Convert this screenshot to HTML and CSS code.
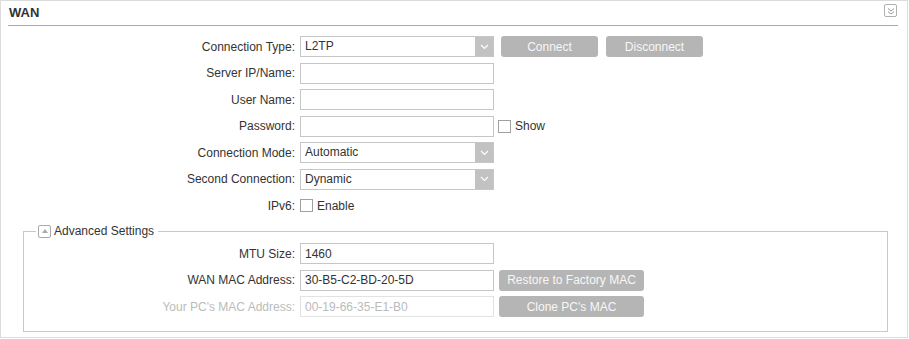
FILE: index.html
```html
<!DOCTYPE html>
<html lang="en">

<head>
    <meta charset="UTF-8">
    <title>WAN</title>
    <link rel="stylesheet" href="styles.css">
</head>

<body>
    <div class="panel">
        <div class="panel-head">
            <h3>WAN</h3>
            <span class="collapse">
                <svg width="8" height="8" viewBox="0 0 8 8"><path d="M1 1.5 L4 4 L7 1.5 M1 4.5 L4 7 L7 4.5" fill="none" stroke="#999" stroke-width="1"/></svg>
            </span>
        </div>

        <div class="form">
            <div class="row">
                <label>Connection Type:</label>
                <div class="select"><span class="val">L2TP</span><span class="arrow"><svg width="9" height="6" viewBox="0 0 9 6"><path d="M1 1 L4.5 4.5 L8 1" fill="none" stroke="#fff" stroke-width="1.2"/></svg></span></div>
                <button class="btn">Connect</button>
                <button class="btn">Disconnect</button>
            </div>
            <div class="row">
                <label>Server IP/Name:</label>
                <input class="text" type="text">
            </div>
            <div class="row">
                <label>User Name:</label>
                <input class="text" type="text">
            </div>
            <div class="row">
                <label>Password:</label>
                <input class="text" type="password">
                <span class="check"></span><span class="check-label">Show</span>
            </div>
            <div class="row">
                <label>Connection Mode:</label>
                <div class="select"><span class="val">Automatic</span><span class="arrow"><svg width="9" height="6" viewBox="0 0 9 6"><path d="M1 1 L4.5 4.5 L8 1" fill="none" stroke="#fff" stroke-width="1.2"/></svg></span></div>
            </div>
            <div class="row">
                <label>Second Connection:</label>
                <div class="select"><span class="val">Dynamic</span><span class="arrow"><svg width="9" height="6" viewBox="0 0 9 6"><path d="M1 1 L4.5 4.5 L8 1" fill="none" stroke="#fff" stroke-width="1.2"/></svg></span></div>
            </div>
            <div class="row">
                <label>IPv6:</label>
                <span class="check first"></span><span class="check-label">Enable</span>
            </div>
        </div>

        <fieldset class="advanced">
            <legend>
                <span class="toggle"><svg width="6" height="4" viewBox="0 0 6 4"><path d="M0 4 L3 0 L6 4 Z" fill="#aaa"/></svg></span>
                Advanced Settings
            </legend>
            <div class="row">
                <label>MTU Size:</label>
                <input class="text" type="text" value="1460">
            </div>
            <div class="row">
                <label>WAN MAC Address:</label>
                <input class="text" type="text" value="30-B5-C2-BD-20-5D">
                <button class="btn wide">Restore to Factory MAC</button>
            </div>
            <div class="row disabled">
                <label>Your PC's MAC Address:</label>
                <input class="text" type="text" value="00-19-66-35-E1-B0" disabled>
                <button class="btn wide">Clone PC's MAC</button>
            </div>
        </fieldset>
    </div>
</body>

</html>
```

FILE: styles.css
```css
* {
    margin: 0;
    padding: 0;
    box-sizing: border-box;
}

body {
    font-family: "Liberation Sans", Arial, sans-serif;
    font-size: 12px;
    color: #333;
    background: #fff;
}

.panel {
    width: 908px;
    height: 338px;
    border: 1px solid #dcdcdc;
}

.panel-head {
    display: flex;
    align-items: center;
    justify-content: space-between;
    height: 25px;
    margin: 0 9px 0 7px;
    border-bottom: 1px solid #a8a8a8;
    padding-left: 1px;
    padding-right: 1px;
}

.panel-head h3 {
    font-size: 13px;
    font-weight: bold;
    color: #333;
    margin-top: -1px;
}

.collapse {
    width: 13px;
    height: 13px;
    border: 1px solid #b0b0b0;
    border-radius: 2px;
    display: flex;
    align-items: center;
    justify-content: center;
    margin-top: -5px;
}

.form {
    padding-top: 10px;
    display: flex;
    flex-direction: column;
    gap: 5.5px;
}

.row {
    display: flex;
    align-items: center;
    height: 21px;
}

.row label {
    width: 299px;
    text-align: right;
    padding-right: 5px;
    flex-shrink: 0;
}

.text {
    width: 194px;
    height: 21px;
    border: 1px solid #c6c6c6;
    font-family: inherit;
    font-size: 12px;
    color: #333;
    padding: 0 4px;
    outline: none;
    background: #fff;
}

.text:disabled {
    border-color: #e2e2e2;
    color: #bbb;
    background: #fff;
}

.select {
    width: 194px;
    height: 21px;
    border: 1px solid #c6c6c6;
    display: flex;
    align-items: stretch;
}

.select .val {
    flex: 1;
    padding-left: 4px;
    line-height: 19px;
}

.select .arrow {
    width: 18px;
    background: #c2c2c2;
    display: flex;
    align-items: center;
    justify-content: center;
}

.btn {
    width: 97px;
    height: 21px;
    margin-left: 7px;
    border: none;
    border-radius: 3px;
    background: #b5b5b5;
    color: #f7f7f7;
    font-family: inherit;
    font-size: 12px;
}

.btn + .btn {
    margin-left: 8px;
}

.btn.wide {
    width: 145px;
    margin-left: 5px;
}

.check {
    width: 13px;
    height: 13px;
    border: 1px solid #a0a0a0;
    background: #fff;
    margin-left: 4px;
}

.check.first {
    margin-left: 0;
}

.check-label {
    margin-left: 4px;
}

.disabled label {
    color: #bbb;
}

.advanced {
    margin: 8px 19px 0 22px;
    border: 1px solid #c8c8d0;
    padding: 5px 0 14px 0;
    display: flex;
    flex-direction: column;
    gap: 5.5px;
}

.advanced legend {
    margin-left: 12px;
    padding: 0 4px 0 2px;
    display: flex;
    align-items: center;
    line-height: 14px;
}

.toggle {
    width: 13px;
    height: 13px;
    border: 1px solid #aaa;
    border-radius: 2px;
    display: inline-flex;
    align-items: center;
    justify-content: center;
    margin-right: 3px;
}

.advanced .row label {
    width: 276px;
}
```
